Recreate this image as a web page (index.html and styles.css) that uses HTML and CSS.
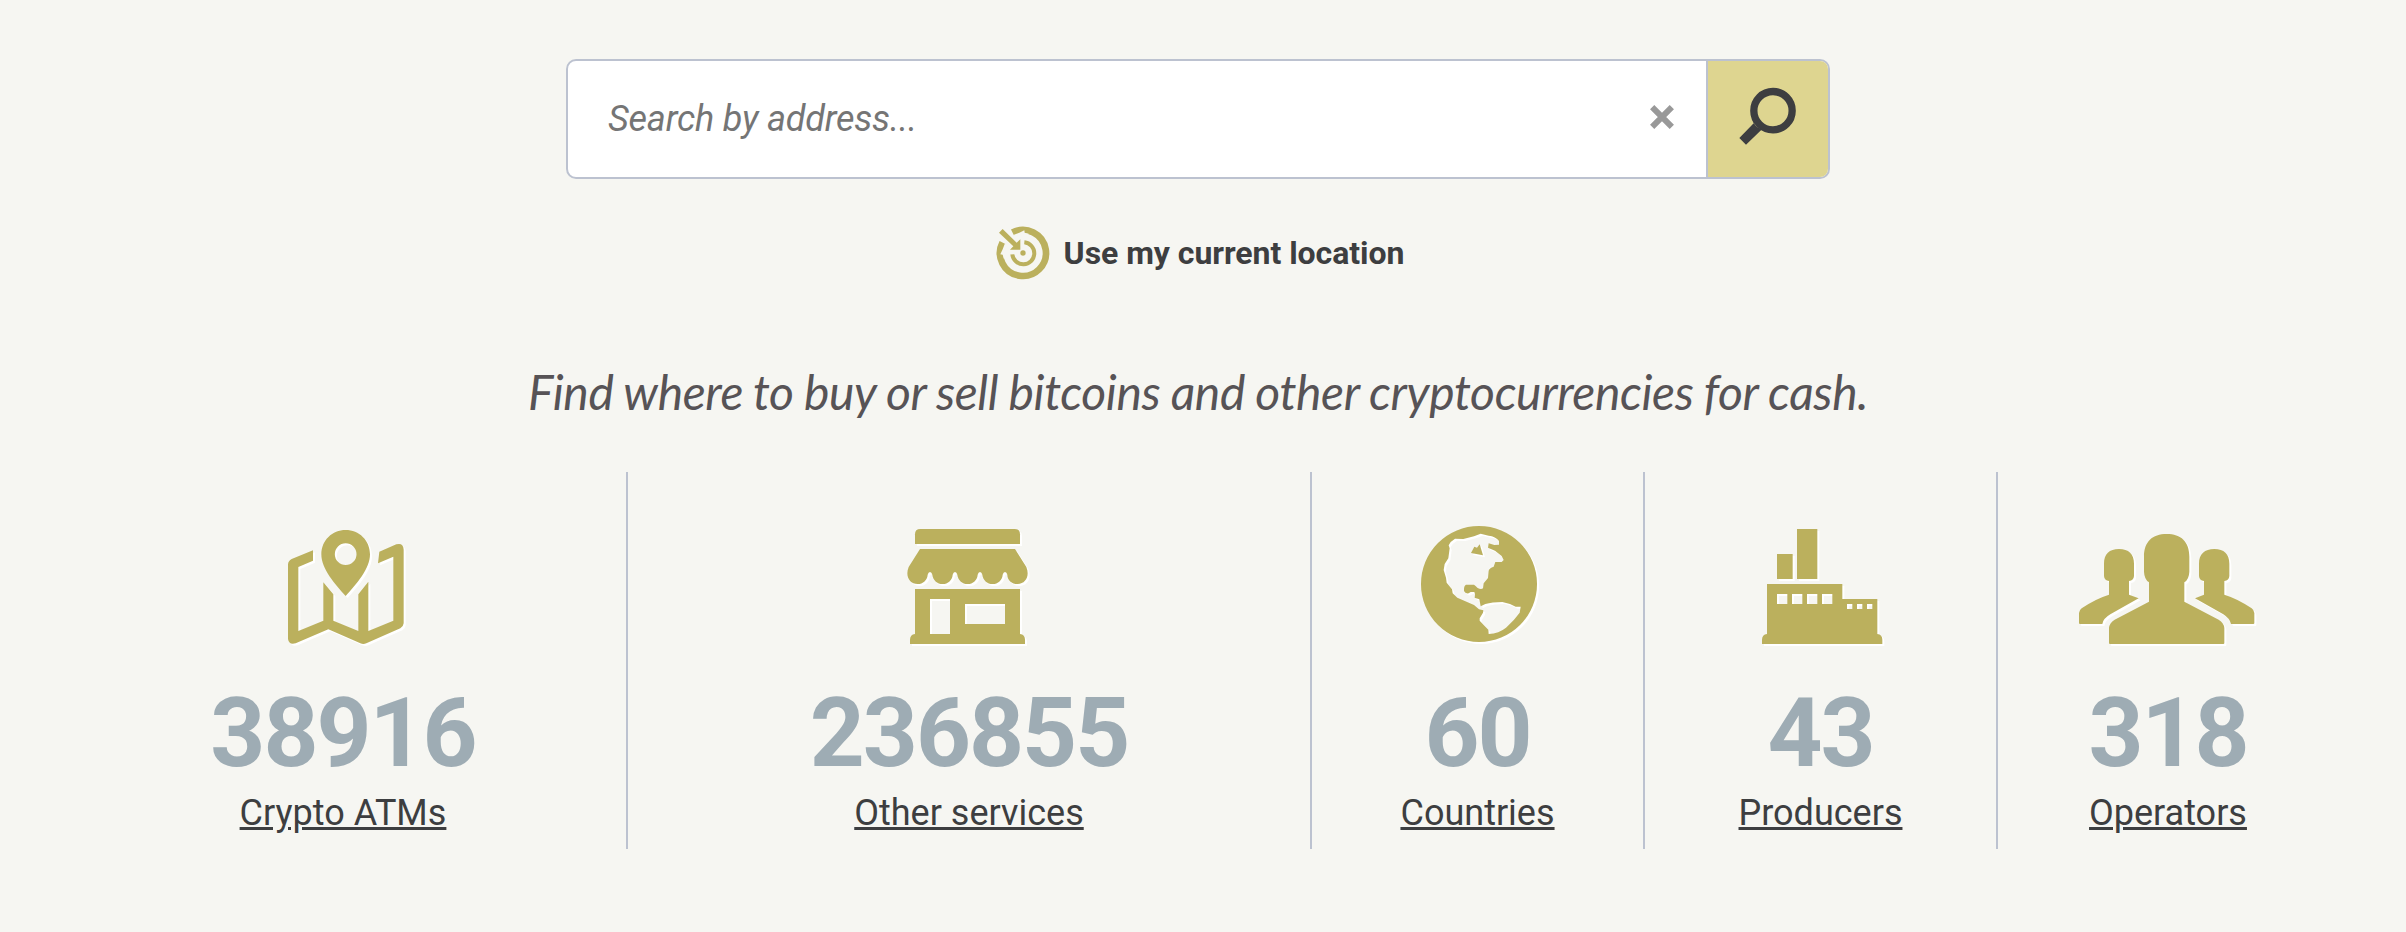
FILE: index.html
```html
<!DOCTYPE html>
<html lang="en">

<head>
  <meta charset="UTF-8" />
  <meta name="viewport" content="width=device-width, initial-scale=1.0" />
  <title>Crypto ATM Map</title>
  <link rel="stylesheet" href="styles.css">
</head>

<body>

  <form class="search">
    <input type="text" class="search-input" placeholder="Search by address..." />
    <button type="reset" class="search-clear" aria-label="Clear">
      <svg viewBox="141 192 90 90" width="30" height="30">
        <path d="M156.500 201.500L215.500 260.500M215.500 201.500L156.500 260.500" stroke="#999" stroke-width="18" />
      </svg>
    </button>
    <button type="submit" class="search-submit" aria-label="Search">
      <svg viewBox="324 63 360 348" width="120" height="116">
        <circle cx="519" cy="212" r="57.5" fill="none" stroke="#3d3e40" stroke-width="22" />
        <path d="M460 246Q468 263 486 268L438 314L418 294L464 247Z" fill="#3d3e40" />
      </svg>
    </button>
  </form>

  <a class="location">
    <svg viewBox="48 48 162 162" width="54" height="54">
      <path d="M97.500 67.500A69 69 0 1 1 67.500 97.500" fill="none" stroke="#bbb05d" stroke-width="20" />
      <path d="M100 75L118 68L133 61L134 68L148 72L118 74L106 80ZM75 100L68 118L61 133L68 134L72 148L74 118L80 106Z" fill="#f6f6f2" />
      <path d="M133 97A33 33 0 1 1 97 133" fill="none" stroke="#bbb05d" stroke-width="12" />
      <circle cx="129" cy="129" r="8" fill="#bbb05d" />
      <path d="M68 57L110 98L121 88V119H90L100 109L57 68Z" fill="#bbb05d" />
    </svg>
    <span>Use my current location</span>
  </a>

  <p class="tagline">Find where to buy or sell bitcoins and other cryptocurrencies for cash.</p>

  <div class="stats">
    <div class="stat">
      <!-- map with pin -->
      <svg class="icon" viewBox="-21 0 480 450" width="160" height="150">
        <path fill-rule="evenodd" d="M227 60C187 60 154 91 154 133C154 177 195 223 227 258C259 223 300 177 300 133C300 91 267 60 227 60ZM227 100A32.500 32.500 0 1 1 227 165A32.500 32.500 0 1 1 227 100Z" />
        <path d="M129 121V152L85 171V363L160 332V217L190 253V332L265 363V253L295 215V363L370 332V140L324 160L328 125L379 103Q400 97 401 119V340Q400 350 391 355L289 400Q280 404 271 400L175 358L77 400Q57 406 54 387V163Q55 152 65 147Z" />
      </svg>
      <strong class="number">38916</strong>
      <a class="label">Crypto ATMs</a>
    </div>

    <div class="stat">
      <!-- shop -->
      <svg class="icon" viewBox="-3 0 480 450" width="160" height="150">
        <path d="M75 102V73Q75 57 91 57H374Q390 57 390 73V102Z" />
        <path d="M90 117H375L409 171C420 198 407 222 383 222C365 222 352 210 352 194Q350 186 345 186Q340 186 338 194C337 210 324 222 308 222C291 222 279 210 277 194Q275 186 270 186Q265 186 263 194C262 210 249 222 233 222C216 222 204 210 202 194Q200 186 195 186Q190 186 188 194C187 210 174 222 158 222C141 222 129 210 127 194Q125 186 120 186Q115 186 113 194C112 210 99 222 83 222C58 222 45 198 56 171Z" />
        <path fill-rule="evenodd" d="M75 237H390V372Q405 374 405 389V402H60V389Q60 374 75 372ZM120 267V372H180V267ZM225 282V342H345V282Z" />
      </svg>
      <strong class="number">236855</strong>
      <a class="label">Other services</a>
    </div>

    <div class="stat">
      <!-- globe -->
      <svg class="icon" viewBox="-8 0 480 450" width="160" height="150">
        <path fill-rule="evenodd" d="M235 48A174 174 0 1 1 235 396A174 174 0 1 1 235 48ZM144 106Q150 93 163 86L188 87L220 79L240 71L264 77Q285 79 295 93V104L281 105L264 100L262 113L283 122L303 138L309 150L303 156H284L279 170Q266 174 264 182L262 204L249 220L247 235Q241 240 231 234Q224 226 220 224H196Q189 228 190 243Q194 252 204 250L210 246H221L223 253L222 263L236 268L240 289L254 282Q274 276 305 276L328 282L345 290L360 290L357 308L340 329L316 353Q295 370 264 372L263 359L249 345L237 332V325L247 308L248 301L235 298L220 285L201 277L170 263L156 250L154 238L138 218L136 203L129 180L132 162L143 145L147 115ZM237 103L229 113L221 110L211 129L247 136Z" />
      </svg>
      <strong class="number">60</strong>
      <a class="label">Countries</a>
    </div>

    <div class="stat">
      <!-- factory -->
      <svg class="icon" viewBox="1 0 480 450" width="160" height="150">
        <path d="M109 132H156V207H109ZM169 57H230V207H169Z" />
        <path fill-rule="evenodd" d="M79 222H305V267H410V372Q425 374 425 389V402H64V389Q64 374 79 372ZM109 252V282H140V252ZM154 252V282H185V252ZM199 252V282H230V252ZM244 252V282H275V252ZM319 282V297H335V282ZM349 282V297H365V282ZM379 282V297H395V282Z" />
      </svg>
      <strong class="number">43</strong>
      <a class="label">Producers</a>
    </div>

    <div class="stat">
      <!-- group of people -->
      <svg class="icon" viewBox="9 0 630 450" width="210" height="150">
        <path d="M320 72C363 72 388 95 388 140V185Q387 208 373 217V275L476 329Q492 339 493 354V399Q493 402 490 402H150Q147 402 147 399V354Q148 339 164 329L267 275V217Q253 208 252 185V140C252 95 277 72 320 72Z" />
        <path d="M177 117C206 117 222 132 222 161V198Q221 211 207 213V254L236 265L151 313Q129 326 127 342H60Q57 342 57 339V309Q58 300 65 295Q105 267 147 254V213Q133 211 132 198V161C132 132 148 117 177 117Z" />
        <path d="M463 117C434 117 417 132 417 161V198Q418 211 432 213V254L405 265L490 313Q510 326 513 342H580Q583 342 583 339V309Q582 300 575 295Q535 267 493 254V213Q507 211 508 198V161C508 132 492 117 463 117Z" />
      </svg>
      <strong class="number">318</strong>
      <a class="label">Operators</a>
    </div>
  </div>

</body>

</html>
```

FILE: styles.css
```css
* {
  box-sizing: border-box;
}

body {
  margin: 0;
  padding: 59px 10px 0 0;
  background-color: #f6f6f2;
  color: #3d3e40;
  font-family: Roboto, sans-serif;
  display: flex;
  flex-direction: column;
  align-items: center;
}

.search {
  display: flex;
  width: 1264px;
  height: 120px;
  margin: 0;
  background-color: #fff;
  border: 2px solid #bcc2d0;
  border-radius: 10px;
  overflow: hidden;
}

.search-input {
  flex: 1;
  min-width: 0;
  padding: 0 0 0 40px;
  border: none;
  outline: none;
  background: none;
  font-family: Roboto, sans-serif;
  font-size: 36px;
  font-style: italic;
  letter-spacing: -0.2px;
}

.search-input::placeholder {
  color: #757575;
}

button {
  padding: 0;
  border: none;
  background: none;
  cursor: pointer;
}

button svg {
  display: block;
}

.search-clear {
  width: 30px;
  margin-right: 29px;
}

.search-submit {
  width: 122px;
  background-color: #ded590;
  border-left: 2px solid #bcc2d0;
}

.location {
  display: flex;
  align-items: center;
  gap: 14px;
  margin-top: 47px;
  padding-left: 4px;
  font-size: 32px;
  font-weight: bold;
  line-height: 54px;
  letter-spacing: -0.05px;
}

.tagline {
  margin: 82px 0 0;
  color: #575356;
  font-family: Lato, sans-serif;
  font-size: 48px;
  font-style: italic;
  line-height: 60px;
  letter-spacing: -0.38px;
  word-spacing: -0.5px;
  white-space: nowrap;
}

.stats {
  display: grid;
  grid-template-columns: 568px 684px 333px 353px 338px;
  width: 2276px;
  height: 377px;
  margin-top: 50px;
}

.stat {
  display: flex;
  flex-direction: column;
  align-items: center;
  padding-top: 38px;
  border-right: 2px solid #bcc2d0;
}

.stat:last-child {
  padding-left: 2px;
  border-right: none;
}

.icon {
  fill: #bbb05d;
  filter: drop-shadow(2px 2px 0 #fff);
}

.number {
  margin-top: 25px;
  color: #9eacb4;
  font-size: 96px;
  line-height: 96px;
  letter-spacing: -2px;
}

.label {
  margin-top: 8px;
  font-size: 36px;
  line-height: 48px;
  text-decoration: underline;
}
```
